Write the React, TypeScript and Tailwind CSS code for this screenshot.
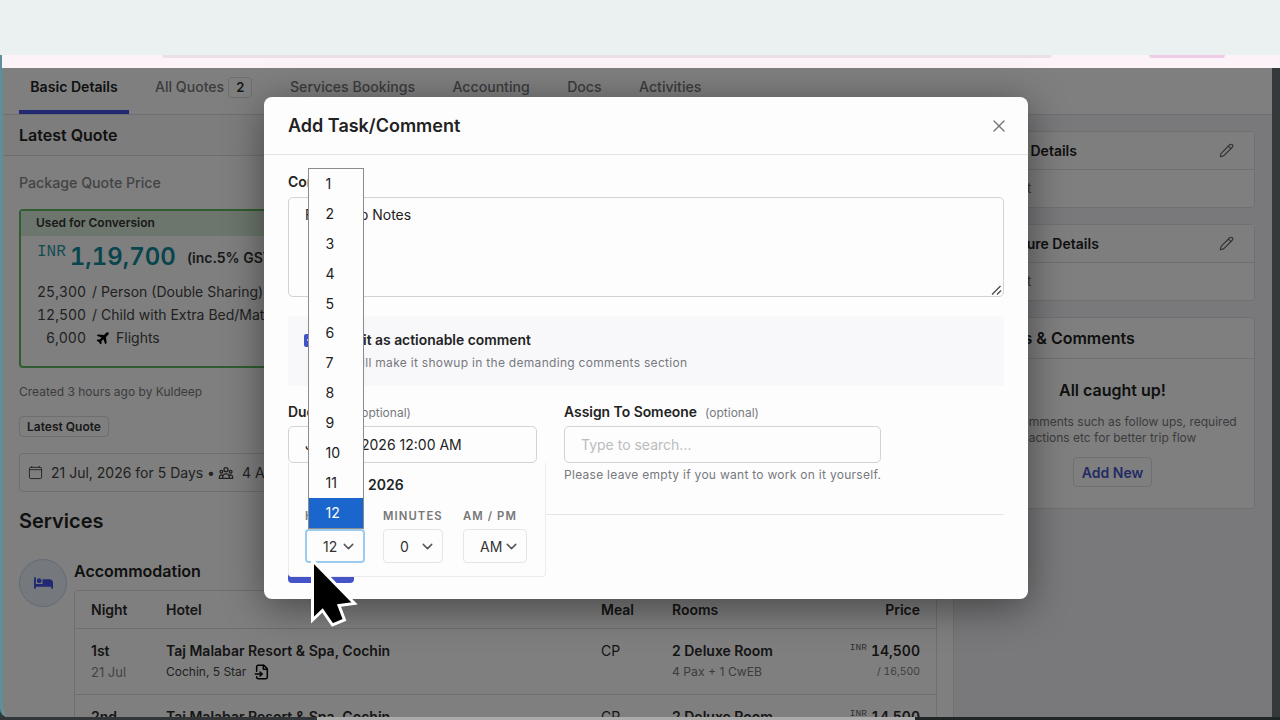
import { ChevronDown, FileInput, Pencil, X } from "lucide-react";
import { FaBed, FaCheck } from "react-icons/fa";
import { HiOutlineUserGroup } from "react-icons/hi";
import { IoAirplane, IoCalendarClearOutline } from "react-icons/io5";

const tabs = ["Services Bookings", "Accounting", "Docs", "Activities"];

const hours = [1, 2, 3, 4, 5, 6, 7, 8, 9, 10, 11, 12];

const nights = [
  { night: "1st", date: "21 Jul" },
  { night: "2nd", date: "22 Jul" },
];

const Tabs = () => (
  <nav className="flex h-[47px] shrink-0 border-b border-[#dedee2] bg-white text-[14.1px] font-medium leading-5 text-[#77797d]">
    <div className="ml-4 w-[110px] border-b-4 border-[#4553e0] pt-[9px] text-center font-semibold text-[#222]">Basic Details</div>
    <div className="flex w-[122px] pl-[26px] pt-[9px]">
      All Quotes
      <span className="ml-[4px] h-[21px] rounded border border-[#dedee2] px-[7px] text-[13px] font-semibold leading-[19px] text-[#333]">2</span>
    </div>
    <div className="flex gap-[37.5px] pl-[39px] pt-[9px]">
      {tabs.map((tab) => (
        <span key={tab}>{tab}</span>
      ))}
    </div>
  </nav>
);

const QuotePrice = () => (
  <div className="mt-4 h-[159px] rounded border-2 border-[#5fba62] text-[14px] leading-[23px] text-[#444]">
    <div className="h-[25px] bg-[#d8edd9] pl-[15px] text-[12px] font-semibold leading-6 text-[#333]">Used for Conversion</div>
    <div className="flex h-[44px] pl-4">
      <span className="pt-1 font-mono text-[16px] leading-[24px] text-[#2c98a3]">INR</span>
      <span className="ml-1 pt-[5px] text-[24px] font-semibold tabular-nums leading-8 text-[#128a9a]">1,19,700</span>
      <span className="ml-[11px] pt-[10px] font-semibold text-[#333]">(inc.5% GST)</span>
    </div>
    <div className="flex gap-[6px] pl-4">
      <span className="w-[49px] text-right tabular-nums">25,300</span>
      <span>/ Person (Double Sharing)</span>
    </div>
    <div className="flex gap-[6px] pl-4">
      <span className="w-[49px] text-right tabular-nums">12,500</span>
      <span>/ Child with Extra Bed/Mattress</span>
    </div>
    <div className="flex gap-[6px] pl-4">
      <span className="w-[49px] text-right tabular-nums">6,000</span>
      <span className="flex items-center gap-[5px]">
        <IoAirplane className="ml-1 h-[15px] w-[15px] -rotate-45 text-black" />
        Flights
      </span>
    </div>
  </div>
);

const Hotels = () => (
  <div className="flex pt-6">
    <div className="flex h-12 w-12 shrink-0 items-center justify-center rounded-full border border-[#c3d5ec] bg-[#eaf1fb]">
      <FaBed className="h-[18px] w-[19px] text-[#4553e0]" />
    </div>
    <div className="ml-[7px] w-[863px]">
      <h3 className="text-[16px] font-semibold leading-6 text-[#222]">Accommodation</h3>
      <div className="mt-[7px] rounded-t border border-[#dedee2] text-[14px] leading-5 text-[#2b2b2b]">
        <div className="flex h-[38px] items-center border-b border-[#dedee2] px-4 font-semibold">
          <span className="w-[75px]">Night</span>
          <span className="w-[435px]">Hotel</span>
          <span className="w-[71px]">Meal</span>
          <span className="flex-1">Rooms</span>
          <span>Price</span>
        </div>
        {nights.map((n) => (
          <div key={n.night} className="flex h-[66px] border-b border-[#dedee2] px-4 pt-3">
            <div className="w-[75px]">
              <div className="font-semibold">{n.night}</div>
              <div className="text-[13px] leading-[22px] text-[#85878a]">{n.date}</div>
            </div>
            <div className="w-[435px]">
              <div className="font-semibold">Taj Malabar Resort & Spa, Cochin</div>
              <div className="flex items-center text-[12px] leading-[22px] text-[#444]">
                Cochin, 5 Star
                <FileInput className="ml-[8px] h-4 w-4 text-black" strokeWidth={2.3} />
              </div>
            </div>
            <div className="w-[71px]">CP</div>
            <div className="flex-1">
              <div className="font-semibold">2 Deluxe Room</div>
              <div className="text-[12.2px] leading-[22px] text-[#77797d]">4 Pax + 1 CwEB</div>
            </div>
            <div className="text-right tabular-nums">
              <div className="flex justify-end gap-[4px] font-semibold">
                <span className="font-mono text-[9.5px] font-normal leading-[14px] text-[#666]">INR</span>
                14,500
              </div>
              <div className="text-[10.4px] leading-[22px] text-[#77797d]">/ 16,500</div>
            </div>
          </div>
        ))}
      </div>
    </div>
  </div>
);

const SideCard = ({ title, body }: { title: string; body: string }) => (
  <div className="mb-4 h-[77px] rounded border border-[#e0e0e4] bg-white">
    <div className="flex h-[38px] items-center justify-between border-b border-[#e0e0e4] bg-[#fcfcfd] pl-4 pr-5 text-[14px] font-semibold text-[#222]">
      {title}
      <Pencil className="h-[15px] w-[15px] text-[#666]" strokeWidth={1.8} />
    </div>
    <div className="pl-4 text-[13px] leading-[37px] text-[#666]">{body}</div>
  </div>
);

const Sidebar = () => (
  <aside className="w-[319px] shrink-0 border-l border-[#e0e0e4] bg-[#f3f3f6] pl-4 pr-[17px] pt-4">
    <SideCard title="Guest Details" body="Not set" />
    <SideCard title="Brochure Details" body="Not set" />
    <div className="h-[192px] rounded border border-[#e0e0e4] bg-white text-center">
      <div className="h-[41px] border-b border-[#e0e0e4] pl-4 text-left text-[16px] font-semibold leading-10 text-[#222]">Tasks & Comments</div>
      <div className="pt-[19px] text-[16px] font-semibold leading-6 text-[#222]">All caught up!</div>
      <p className="pt-[12px] text-[12px] leading-4 text-[#77797d]">
        Add comments such as follow ups, required
        <br />
        actions etc for better trip flow
      </p>
      <button className="mt-[11px] h-[30px] rounded border border-[#dedee2] px-2 text-[14px] font-semibold text-[#4559c8]">Add New</button>
    </div>
  </aside>
);

const TimeSelect = ({ label, value, className }: { label: string; value: string; className: string }) => (
  <div>
    <div className="text-[11.3px] font-semibold leading-4 tracking-[1.1px] text-[#777]">{label}</div>
    <div className={"mt-[5px] flex h-[34px] items-center justify-between rounded pr-[6px] text-[14px] text-[#333] " + className}>
      {value}
      <ChevronDown className="h-[17px] w-[17px] text-[#555]" strokeWidth={2} />
    </div>
  </div>
);

const TimePicker = () => (
  <div className="absolute left-0 top-[36px] z-10 h-[114px] w-[258px] rounded-b border border-t-0 border-[#ececec] bg-[#fdfdfd] pl-4">
    <div className="pt-[10px] text-[14px] font-semibold leading-6 text-[#222]">
      <span className="ml-1 inline-block w-[59px]">July 21</span>2026
    </div>
    <div className="flex pt-[11px]">
      <TimeSelect label="HOURS" value="12" className="w-[60px] border-2 border-[#9ccbee] pl-4" />
      <div className="ml-[18px] w-[80px]">
        <TimeSelect label="MINUTES" value="0" className="w-[60px] border border-[#e6e6e8] pl-4" />
      </div>
      <TimeSelect label="AM / PM" value="AM" className="w-[64px] border border-[#e6e6e8] pl-4" />
    </div>
  </div>
);

const HourList = () => (
  <ul className="absolute left-[308px] top-[168px] z-20 w-[56px] border border-[#8c8c8c] bg-[#fdfdfd] text-[14.1px] text-[#222]">
    {hours.map((h) => (
      <li key={h} className={"h-[29.9px] pl-[16.5px] leading-[30px] " + (h === 12 ? "bg-[#1a66cc] text-white" : "")}>
        {h}
      </li>
    ))}
  </ul>
);

const TaskModal = () => (
  <div className="absolute left-[264px] top-[97px] h-[502px] w-[764px] rounded-lg bg-[#fdfdfd] text-[#222] shadow-[0_8px_40px_rgba(0,0,0,0.45)]">
    <div className="flex h-[58px] items-center justify-between border-b border-[#e6e6e8] pl-6 pr-[19px]">
      <h2 className="text-[18px] font-semibold">Add Task/Comment</h2>
      <X className="h-5 w-5 text-[#777]" strokeWidth={1.7} />
    </div>
    <div className="px-6 pt-[17px]">
      <label className="block text-[14px] font-semibold leading-5">Comments</label>
      <div className="relative mt-[5px] h-[100px] rounded-[5px] border border-[#d2d3d8] pl-4 pt-[7px] text-[14px] leading-5">
        Follow up Notes
        <svg className="absolute bottom-0 right-0 h-[12px] w-[12px]" viewBox="0 0 12 12" stroke="#444" strokeWidth="1.2">
          <path d="M1 10.5L9.500 2M6 10.5l4-4" />
        </svg>
      </div>
      <div className="mt-[19px] flex h-[70px] rounded bg-[#f8f8fb] pl-4 pt-[12.5px]">
        <span className="mt-[5px] flex h-[13px] w-[13px] items-center justify-center rounded-[2px] bg-[#4553c9]">
          <FaCheck className="h-2 w-2 text-white" />
        </span>
        <div className="pl-2">
          <div className="text-[13.9px] font-semibold leading-[22px]">
            <span className="inline-block w-[38px]">Mark</span>it as actionable comment
          </div>
          <div className="text-[12px] leading-6 tracking-[0.3px] text-[#77797d]">
            <span className="inline-block w-[37px]">This w</span>ill make it showup in the demanding comments section
          </div>
        </div>
      </div>
      <div className="mt-4 flex gap-[28px]">
        <div className="w-[248px]">
          <div className="text-[13.9px] font-semibold leading-5">
            <span className="inline-block w-[69px]">Due Date</span>
            <span className="text-[12px] font-normal text-[#77797d]">(optional)</span>
          </div>
          <div className="relative mt-[3px] h-[37px] w-[249px] rounded-[5px] border border-[#d2d3d8] pl-4 text-[14px] leading-[35px]">
            <span className="inline-block w-[56px]">July 21,</span>2026 12:00 AM
            <div className="absolute -left-px top-0">
              <TimePicker />
            </div>
          </div>
        </div>
        <div>
          <div className="text-[13.9px] font-semibold leading-5">
            Assign To Someone
            <span className="ml-2 text-[12px] font-normal text-[#77797d]">(optional)</span>
          </div>
          <div className="mt-[3px] h-[37px] w-[317px] rounded-[5px] border border-[#d2d3d8] pl-4 text-[14px] leading-[35px] text-[#b9bcc0]">Type to search...</div>
          <div className="text-[12px] leading-[23px] tracking-[0.28px] text-[#77797d]">Please leave empty if you want to work on it yourself.</div>
        </div>
      </div>
      <div className="mt-[28px] border-t border-[#e6e6e8] pt-[33px]">
        <div className="h-[35px] w-[66px] rounded bg-[#4553c9] text-center text-[14px] font-semibold leading-[35px] text-white">Save</div>
      </div>
    </div>
  </div>
);

const App = () => {
  return (
    <div className="relative flex h-[720px] w-[1280px] flex-col overflow-hidden whitespace-nowrap bg-[#343a3c] font-['Inter',sans-serif]">
      <div className="h-[55px] shrink-0 bg-[#eaf1f0]" />
      <div className="flex h-[13px] shrink-0 border-l-2 border-[#5d8f9b] bg-[#fbf3f7]">
        <div className="ml-[160px] h-[3px] w-[890px] rounded-b-full bg-[#ecdfe8]" />
        <div className="ml-[97px] h-[3px] w-[76px] rounded-b-full bg-[#efcbe5]" />
      </div>
      <div className="relative flex h-[649px] w-[1272px] shrink-0 flex-col overflow-hidden rounded-bl-lg border-l-[3px] border-[#5d8f9b] bg-white">
        <Tabs />
        <div className="flex min-h-0 flex-1">
          <main className="flex-1">
            <div className="h-[41px] border-b border-[#dedee2] bg-[#fbfbfb] pl-4 text-[16px] font-semibold leading-10 text-[#222]">Latest Quote</div>
            <div className="pl-4 pr-4 pt-[17px]">
              <div className="text-[14.2px] font-medium leading-5 text-[#85878a]">Package Quote Price</div>
              <QuotePrice />
              <div className="pt-[15px] text-[12px] leading-[18px] text-[#77797d]">Created 3 hours ago by Kuldeep</div>
              <div className="mt-[15px] h-[21px] w-[90px] rounded border border-[#dedee2] text-center text-[12px] font-semibold leading-[19px] text-[#333]">Latest Quote</div>
              <div className="mt-4 flex h-[39px] items-center rounded border border-[#dedee2] pl-[8px] text-[14px] text-[#444]">
                <IoCalendarClearOutline className="mr-2 h-[15px] w-[15px]" />
                21 Jul, 2026 for 5 Days •
                <HiOutlineUserGroup className="ml-[3px] mr-2 h-4 w-4" />4 Adults
              </div>
              <h2 className="pt-[15px] text-[20px] font-semibold leading-7 text-[#222]">Services</h2>
              <Hotels />
            </div>
          </main>
          <Sidebar />
        </div>
        <div className="absolute inset-0 bg-black/50" />
      </div>
      <div className="flex h-[3px]">
        <div className="w-[317px] bg-[#333638]" />
        <div className="w-[598px] bg-[#aaa]" />
        <div className="flex-1 bg-[#202626]" />
      </div>
      <TaskModal />
      <HourList />
      <svg className="absolute left-[305px] top-[552px] z-30 h-[80px] w-[58px]" viewBox="306 552 58 80">
        <path d="M313.500 560.500L313.500 620L323.500 610.500L333.500 625L345.500 620L340 605.500L355.500 603.500Z" fill="#000" stroke="#fff" strokeWidth="3" />
      </svg>
    </div>
  );
};

export default App;
